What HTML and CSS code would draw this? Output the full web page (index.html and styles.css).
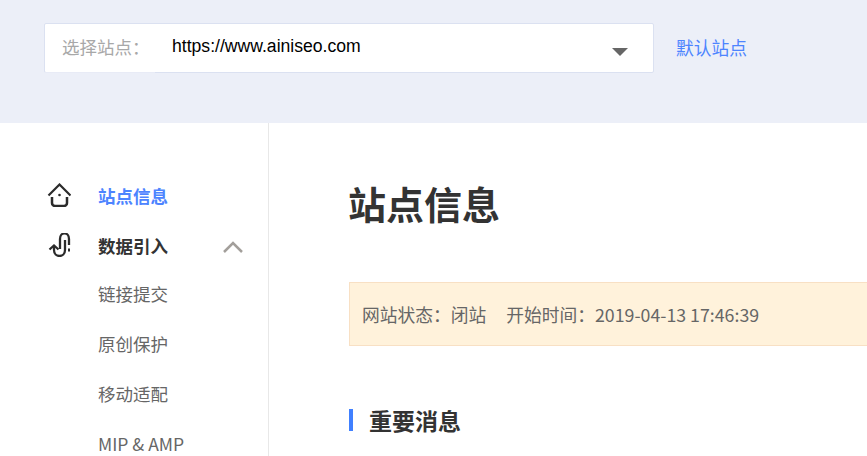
FILE: index.html
```html
<!DOCTYPE html>
<html lang="zh-CN">
<head>
<meta charset="utf-8">
<title>站点信息</title>
<link rel="stylesheet" href="styles.css">
</head>
<body>
<header class="topbar">
  <div class="site-select">
    <span class="site-label"><span class="site-label-text">选择站点&#xFF1A;</span></span>
    <span class="site-value">https://www.ainiseo.com</span>
    <span class="caret"></span>
  </div>
  <a class="default-link">默认站点</a>
</header>
<div class="layout">
  <nav class="sidebar">
    <div class="nav-item active">
      <svg class="nav-icon" viewBox="47 183 24 24" width="24" height="24" fill="none" stroke="#2b2b2b" stroke-width="2.200">
        <path d="M48.500 195.500 L59.500 184.500 L70.500 195.500"/>
        <path d="M52 197 V203 a3 3 0 0 0 3 3 H64 a3 3 0 0 0 3 -3 V197" stroke-width="2.500"/>
        <circle cx="59.500" cy="195" r="1.300" fill="#2b2b2b" stroke="none"/>
      </svg>
      <span>站点信息</span>
    </div>
    <div class="nav-item group">
      <svg class="nav-icon" viewBox="47 233 24 24" width="24" height="24" fill="none" stroke="#2b2b2b" stroke-width="2.300">
        <path d="M49.500 249.500 L54 245.500 L58.500 249.500"/>
        <path d="M54 246 V250 C54 258 65 258 65 250 V240"/>
        <path d="M60 249 V239 C60 231.500 69 231.500 69 239 V245"/>
        <path d="M69 248.500 V251.500" stroke-width="2"/>
      </svg>
      <span>数据引入</span>
      <svg class="chevron" viewBox="0 0 20 12" width="20" height="12" fill="none" stroke="#a39f9b" stroke-width="2.500">
        <path d="M1 11 L10 2 L19 11"/>
      </svg>
    </div>
    <div class="nav-sub">链接提交</div>
    <div class="nav-sub">原创保护</div>
    <div class="nav-sub">移动适配</div>
    <div class="nav-sub">MIP &amp; AMP</div>
  </nav>
  <main class="content">
    <h1 class="page-title">站点信息</h1>
    <div class="notice">
      <span>网站状态&#xFF1A;闭站</span>
      <span>开始时间&#xFF1A;2019-04-13 17:46:39</span>
    </div>
    <h2 class="section-title">重要消息</h2>
  </main>
</div>
</body>
</html>
```
FILE: styles.css
```css
* { box-sizing: border-box; }
html, body { margin: 0; height: 456px; overflow: hidden; }
body {
  font-family: "Noto Sans CJK SC", "Liberation Sans", sans-serif;
  background: #fff;
  color: #333;
}
.topbar {
  height: 123px;
  background: #eceff8;
  padding: 23px 0 0 44px;
  display: flex;
  align-items: flex-start;
}
.site-select {
  width: 610px;
  height: 50px;
  background: #fff;
  border: 1px solid #dbe1f1;
  border-radius: 2px;
  display: flex;
  align-items: stretch;
  position: relative;
}
.site-label {
  width: 110px;
  margin-bottom: -1px;
  border-bottom: 1px solid #e8ebf6;
  padding-left: 17px;
  font-size: 17.500px;
  line-height: 46px;
  color: #a8a8a8;
}
.site-label-text { display: block; }
.site-value {
  font-family: "Liberation Sans", sans-serif;
  font-size: 17.600px;
  line-height: 44px;
  color: #000;
  margin-left: 17px;
}
.caret {
  position: absolute;
  right: 25px;
  top: 24px;
  border-left: 8px solid transparent;
  border-right: 8px solid transparent;
  border-top: 8px solid #666;
}
.default-link {
  margin: 13px 0 0 22px;
  font-size: 17.750px;
  color: #4d84ff;
  line-height: 22px;
}
.layout { display: flex; height: 333px; }
.sidebar {
  width: 269px;
  border-right: 1px solid #e8e8e8;
  padding: 47px 0 0 47px;
  flex: none;
}
.nav-item {
  display: flex;
  align-items: center;
  height: 50px;
  font-size: 17.500px;
  font-weight: 700;
  color: #333;
}
.nav-item.active { color: #4d84ff; }
.nav-icon { flex: none; margin-right: 27px; }
.chevron { margin: 4px 0 0 55px; }
.nav-sub {
  height: 50px;
  line-height: 48px;
  padding-left: 51px;
  font-size: 17.500px;
  color: #666;
}
.content { flex: 1; padding: 55px 0 0 80px; min-width: 0; }
.page-title {
  margin: 0 0 0 -1px;
  font-size: 38px;
  line-height: 50px;
  font-weight: 700;
  color: #333;
}
.notice {
  margin-top: 54px;
  height: 64px;
  background: #fff2db;
  border: 1px solid #f8e0c4;
  border-right: 0;
  padding-left: 12px;
  display: flex;
  align-items: center;
  gap: 20px;
  font-size: 17.750px;
  color: #666;
}
.section-title {
  margin: 63px 0 0;
  border-left: 4px solid #4080ff;
  padding-left: 16px;
  height: 22px;
  line-height: 22px;
  font-size: 23px;
  font-weight: 700;
  color: #333;
}
```
